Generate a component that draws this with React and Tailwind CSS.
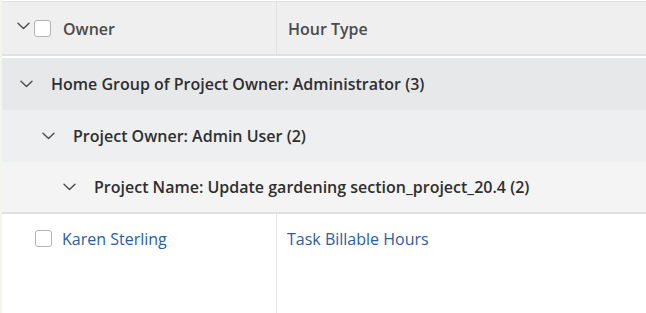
import React from "react";

const Chevron = ({ className = "" }) => (
  <svg width="13" height="8" viewBox="0 0 13 8" className={className}>
    <path d="M1 1.2 L6.5 6.5 L12 1.2" fill="none" stroke="#4b4b4b" strokeWidth="1.4" strokeLinecap="round" strokeLinejoin="round" />
  </svg>
);

const Box = () => (
  <div className="w-[17px] h-[17px] rounded-[3px] border-[1.5px] border-[#b3b3b3] bg-white" />
);

export default function App() {
  return (
    <div
      className="w-[646px] h-[313px] overflow-hidden bg-white flex"
      style={{ fontFamily: "'Open Sans', 'Noto Sans', sans-serif" }}
    >
      <div className="w-[2px] bg-[#f1f7ec] shrink-0" />
      <div className="flex-1 flex flex-col pt-[1px]">
        {/* header */}
        <div className="h-[55px] bg-[#efefef] border-t border-[#e1e1e1] border-b-2 border-b-[#e1e1e1] flex text-[16px] font-semibold text-[#4b4b4b]">
          <div className="w-[275px] border-r border-[#e3e3e3] flex items-start pt-[17px] pl-[15px]">
            <Chevron className="mt-[3px]" />
            <div className="ml-[4px] mt-[1px]"><Box /></div>
            <span className="ml-[12px] leading-[20px]">Owner</span>
          </div>
          <div className="flex-1 pl-[11px] pt-[17px] leading-[20px]">Hour Type</div>
        </div>
        <div className="h-[2px] bg-white" />
        {/* group rows */}
        <div className="h-[52px] bg-[#e7e8ea] flex items-center pl-[18px] text-[16px] font-semibold text-[#2f2f2f]">
          <Chevron />
          <span className="ml-[18px]">Home Group of Project Owner: Administrator (3)</span>
        </div>
        <div className="h-[52px] bg-[#eeeff0] flex items-center pl-[40px] text-[16px] font-semibold text-[#2f2f2f]">
          <Chevron />
          <span className="ml-[18px]">Project Owner: Admin User (2)</span>
        </div>
        <div className="h-[52px] bg-[#f4f4f4] border-b-2 border-[#e1e1e1] flex items-center pl-[61px] text-[16px] font-semibold text-[#2f2f2f]">
          <Chevron />
          <span className="ml-[18px]">Project Name: Update gardening section_project_20.4 (2)</span>
        </div>
        {/* data row */}
        <div className="flex-1 flex text-[16px] text-[#2c5d9f]">
          <div className="w-[275px] border-r border-[#e3e3e3] flex items-start pt-[14px] pl-[33px]">
            <div className="mt-[2px]"><Box /></div>
            <span className="ml-[10px] leading-[22px]">Karen Sterling</span>
          </div>
          <div className="flex-1 pl-[10px] pt-[14px] leading-[22px]">Task Billable Hours</div>
        </div>
      </div>
    </div>
  );
}
